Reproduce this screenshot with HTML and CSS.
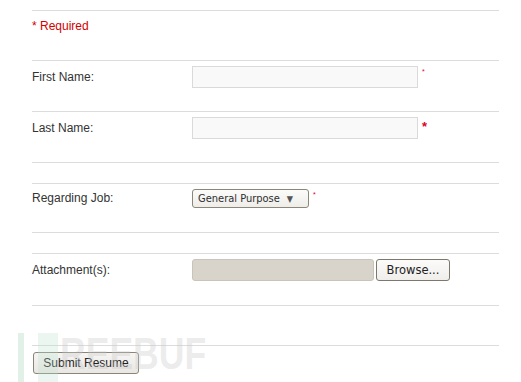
FILE: index.html
```html
<!DOCTYPE html>
<html>
<head>
<meta charset="utf-8">
<link rel="stylesheet" href="styles.css">
</head>
<body>
<form class="form">
  <div class="row row-req">
    <span class="required-note">* Required</span>
  </div>
  <div class="row row-field">
    <label class="label">First Name:</label>
    <span class="text-input"></span>
    <span class="req req-small">*</span>
  </div>
  <div class="row row-field">
    <label class="label">Last Name:</label>
    <span class="text-input"></span>
    <span class="req req-big">*</span>
  </div>
  <div class="row row-spacer"></div>
  <div class="row row-select">
    <label class="label label-select">Regarding Job:</label>
    <span class="select">General Purpose<span class="arrow">▼</span></span>
    <span class="req req-small">*</span>
  </div>
  <div class="row row-spacer"></div>
  <div class="row row-file">
    <label class="label">Attachment(s):</label>
    <span class="file-field"></span>
    <span class="browse">Browse...</span>
  </div>
  <div class="row row-spacer-big"></div>
  <div class="row row-submit">
    <button type="button" class="submit">Submit Resume</button>
  </div>
</form>
<div class="watermark">
  <span class="wm-bar"></span>
  <span class="wm-block"></span>
  <span class="wm-text">REEBUF</span>
</div>
</body>
</html>
```
FILE: styles.css
```css
html, body {
  margin: 0;
  padding: 0;
  background: #ffffff;
}
body {
  font-family: "Liberation Sans", Arial, sans-serif;
  font-size: 12px;
  color: #333333;
  position: relative;
  width: 521px;
  height: 382px;
  overflow: hidden;
}
.form {
  margin: 0 0 0 32px;
  padding-top: 10px;
  width: 467px;
}
.row {
  border-top: 1px solid #dcdcdc;
  box-sizing: border-box;
  display: flex;
  align-items: flex-start;
}
.row-req {
  height: 50px;
  padding-top: 8px;
}
.required-note {
  color: #d40000;
  line-height: 14px;
}
.row-field {
  height: 51px;
  padding-top: 5px;
}
.row-spacer {
  height: 21px;
}
.row-select {
  height: 49px;
  padding-top: 5px;
}
.row-file {
  height: 52px;
  padding-top: 5px;
}
.row-spacer-big {
  height: 40px;
}
.row-submit {
  padding-top: 6px;
  height: 37px;
}
.label {
  width: 160px;
  flex: none;
  line-height: 14px;
  margin-top: 4px;
  color: #333333;
}
.label-select {
  margin-top: 2px;
}
.text-input {
  display: block;
  width: 226px;
  height: 22px;
  box-sizing: border-box;
  border: 1px solid #dadada;
  background: #f9f9f9;
}
.req {
  color: #e0002a;
  line-height: 1;
  flex: none;
}
.req-small {
  font-size: 7px;
  margin-left: 4px;
  margin-top: 2px;
}
.req-big {
  font-size: 13px;
  font-weight: bold;
  margin-left: 4px;
  margin-top: 3px;
}
.select {
  display: flex;
  align-items: center;
  width: 117px;
  height: 19px;
  box-sizing: border-box;
  border: 1px solid #8b8678;
  border-radius: 3px;
  background: linear-gradient(#fbfbfa, #eeede9);
  font-family: "DejaVu Sans Condensed", "DejaVu Sans", sans-serif;
  font-size: 11px;
  color: #2e2e2e;
  padding-left: 5px;
}
.arrow {
  font-size: 9px;
  color: #555;
  margin-left: 7px;
}
.file-field {
  display: block;
  width: 182px;
  height: 22px;
  box-sizing: border-box;
  border: 1px solid #c9c4ba;
  border-radius: 3px;
  background: #d8d4cc;
}
.browse {
  display: flex;
  align-items: center;
  justify-content: center;
  margin-left: 2px;
  width: 74px;
  height: 22px;
  box-sizing: border-box;
  border: 1px solid #7e786c;
  border-radius: 3px;
  background: linear-gradient(#fbfbfa, #efeeeb);
  font-family: "DejaVu Sans", sans-serif;
  font-size: 11.5px;
  color: #222;
}
.submit {
  margin: 0 0 0 1px;
  width: 106px;
  height: 22px;
  box-sizing: border-box;
  border: 1px solid #8a8579;
  border-radius: 3px;
  background: linear-gradient(#f6f5f3, #e9e7e3);
  font-family: "Liberation Sans", Arial, sans-serif;
  font-size: 12px;
  color: #222;
  padding: 0;
}
.watermark {
  position: absolute;
  left: 0;
  top: 0;
  width: 521px;
  height: 382px;
  pointer-events: none;
}
.wm-bar {
  position: absolute;
  left: 18px;
  top: 333px;
  width: 6px;
  height: 49px;
  background: rgba(190, 225, 205, 0.45);
}
.wm-block {
  position: absolute;
  left: 38px;
  top: 333px;
  width: 20px;
  height: 49px;
  background: rgba(190, 225, 205, 0.3);
}
.wm-text {
  position: absolute;
  left: 60px;
  top: 329px;
  font-family: "Liberation Sans", Arial, sans-serif;
  font-weight: bold;
  font-size: 45px;
  line-height: 50px;
  color: rgba(200, 200, 200, 0.35);
  transform: scaleX(0.79);
  transform-origin: left top;
}
```
